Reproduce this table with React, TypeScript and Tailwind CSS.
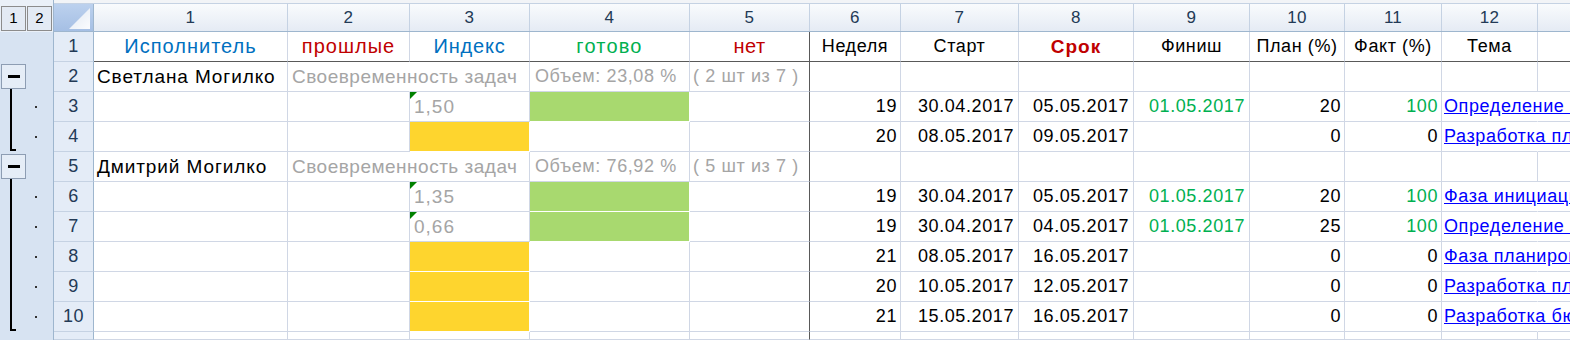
import type { ReactNode } from 'react';

const GRID = 'border-[#d0d7e5]';
const W = [
  'w-[194px]', 'w-[122px]', 'w-[120px]', 'w-[160px]', 'w-[120px]', 'w-[91px]',
  'w-[118px]', 'w-[115px]', 'w-[116px]', 'w-[95px]', 'w-[97px]', 'w-[96px]',
];

type Task = {
  idx?: string;
  week: number;
  start: string;
  due: string;
  finish?: string;
  plan: number;
  fact: number;
  topic: string;
};

type Person = { name: string; volume: string; count: string };

type SheetRow =
  | { kind: 'person'; n: number; person: Person }
  | { kind: 'task'; n: number; task: Task; last?: boolean };

const rows: SheetRow[] = [
  { kind: 'person', n: 2, person: { name: 'Светлана Могилко', volume: 'Объем: 23,08 %', count: '( 2 шт из 7 )' } },
  { kind: 'task', n: 3, task: { idx: '1,50', week: 19, start: '30.04.2017', due: '05.05.2017', finish: '01.05.2017', plan: 20, fact: 100, topic: 'Определение целей проекта' } },
  { kind: 'task', n: 4, last: true, task: { week: 20, start: '08.05.2017', due: '09.05.2017', plan: 0, fact: 0, topic: 'Разработка плана проекта' } },
  { kind: 'person', n: 5, person: { name: 'Дмитрий Могилко', volume: 'Объем: 76,92 %', count: '( 5 шт из 7 )' } },
  { kind: 'task', n: 6, task: { idx: '1,35', week: 19, start: '30.04.2017', due: '05.05.2017', finish: '01.05.2017', plan: 20, fact: 100, topic: 'Фаза инициации' } },
  { kind: 'task', n: 7, task: { idx: '0,66', week: 19, start: '30.04.2017', due: '04.05.2017', finish: '01.05.2017', plan: 25, fact: 100, topic: 'Определение требований' } },
  { kind: 'task', n: 8, task: { week: 21, start: '08.05.2017', due: '16.05.2017', plan: 0, fact: 0, topic: 'Фаза планирования' } },
  { kind: 'task', n: 9, task: { week: 20, start: '10.05.2017', due: '12.05.2017', plan: 0, fact: 0, topic: 'Разработка плана' } },
  { kind: 'task', n: 10, last: true, task: { week: 21, start: '15.05.2017', due: '16.05.2017', plan: 0, fact: 0, topic: 'Разработка бюджета' } },
];

function Cell({ col, className = '', children }: { col: number; className?: string; children?: ReactNode })
{
  const edge = col === 4 ? 'border-r-[#595959]' : '';
  return (
    <div className={`relative shrink-0 h-full border-r border-b ${GRID} ${edge} ${W[col]} whitespace-nowrap leading-[29px] ${className}`}>
      {children}
    </div>
  );
}

function RowHeader({ n }: { n?: number })
{
  return (
    <div className="shrink-0 w-[40px] h-full flex items-center justify-center bg-[#e4ecf7] border-r border-b border-r-[#9eb6ce] border-b-[#c5d2e3] text-[#233a56]">
      {n}
    </div>
  );
}

function GutterCell({ mode }: { mode: 'none' | 'head' | 'mid' | 'end' })
{
  return (
    <div className="relative h-[30px] shrink-0">
      {mode === 'head' && (
        <>
          <div className="absolute left-[1px] top-[2px] w-[25px] h-[25px] border border-[#8d9db3] bg-[#e5edf7] flex items-center justify-center">
            <div className="w-[12px] h-[3px] bg-black" />
          </div>
          <div className="absolute left-[10px] top-[27px] bottom-0 w-[2px] bg-black" />
        </>
      )}
      {(mode === 'mid' || mode === 'end') && (
        <>
          <div className={`absolute left-[10px] top-0 w-[2px] bg-black ${mode === 'end' ? 'bottom-[1px]' : 'bottom-0'}`} />
          {mode === 'end' && <div className="absolute left-[10px] bottom-[1px] w-[6px] h-[2px] bg-black" />}
          <div className="absolute left-[35px] top-[14px] w-[2px] h-[2px] bg-[#333]" />
        </>
      )}
    </div>
  );
}

function PersonRow({ n, person }: { n: number; person: Person })
{
  return (
    <div className="flex h-[30px]">
      <RowHeader n={n} />
      <Cell col={0} className="pl-[3px] text-black text-[19px] tracking-[0.9px]">{person.name}</Cell>
      <Cell col={1} className="pl-[4px] text-[#a5a5a5] text-[19px] tracking-[0.5px] border-r-transparent">Своевременность задач</Cell>
      <Cell col={2} />
      <Cell col={3} className="pl-[5px] text-[#a5a5a5]">{person.volume}</Cell>
      <Cell col={4} className="pl-[3px] text-[#a5a5a5]">{person.count}</Cell>
      {[5, 6, 7, 8, 9, 10, 11].map(c => <Cell key={c} col={c} />)}
      <div className={`flex-1 h-full border-b ${GRID}`} />
    </div>
  );
}

function TaskRow({ n, task }: { n: number; task: Task })
{
  const done = task.finish !== undefined;
  return (
    <div className="flex h-[30px]">
      <RowHeader n={n} />
      <Cell col={0} />
      <Cell col={1} />
      {task.idx ? (
        <Cell col={2} className="pl-[4px] text-[#a5a5a5] text-[19px] tracking-[1px]">
          <span className="absolute left-0 top-0 w-0 h-0 border-t-[7px] border-r-[7px] border-t-[#008000] border-r-transparent" />
          {task.idx}
        </Cell>
      ) : (
        <Cell col={2} className="bg-[#fed52e] border-white" />
      )}
      {done ? <Cell col={3} className="bg-[#a8d96f] border-white" /> : <Cell col={3} />}
      <Cell col={4} />
      <Cell col={5} className="text-right pr-[3px] text-black">{task.week}</Cell>
      <Cell col={6} className="text-right pr-[4px] text-black">{task.start}</Cell>
      <Cell col={7} className="text-right pr-[4px] text-black">{task.due}</Cell>
      <Cell col={8} className="text-right pr-[4px] text-[#00b050]">{task.finish}</Cell>
      <Cell col={9} className="text-right pr-[3px] text-black">{task.plan}</Cell>
      <Cell col={10} className={`text-right pr-[3px] ${task.fact > 0 ? 'text-[#00b050]' : 'text-black'}`}>{task.fact}</Cell>
      <Cell col={11} className="pl-[2px] border-r-transparent">
        <span className="text-[#0000ff] underline">{task.topic}</span>
      </Cell>
      <div className={`flex-1 h-full border-b ${GRID}`} />
    </div>
  );
}

const headers: { label: string; className: string }[] = [
  { label: 'Исполнитель', className: 'text-[#0070c0] text-[20px] tracking-[1px]' },
  { label: 'прошлые', className: 'text-[#c00000] text-[20px] tracking-[1px]' },
  { label: 'Индекс', className: 'text-[#0070c0] text-[20px] tracking-[0.8px]' },
  { label: 'готово', className: 'text-[#00b050] text-[20px] tracking-[1.2px]' },
  { label: 'нет', className: 'text-[#c00000] text-[20px] tracking-[0.5px]' },
  { label: 'Неделя', className: 'text-black' },
  { label: 'Старт', className: 'text-black' },
  { label: 'Срок', className: 'text-[#c00000] font-bold text-[19px] tracking-[1px]' },
  { label: 'Финиш', className: 'text-black' },
  { label: 'План (%)', className: 'text-black' },
  { label: 'Факт (%)', className: 'text-black' },
  { label: 'Тема', className: 'text-black' },
];

export default function App()
{
  return (
    <div className="w-[1570px] h-[340px] overflow-hidden bg-white flex font-['Liberation_Sans',Arial,sans-serif] text-[18px] tracking-[0.6px]">
      {/* outline gutter */}
      <div className="shrink-0 w-[54px] h-full flex flex-col bg-[#d7e3f2] border-r border-[#9eb6ce]">
        <div className="h-[32px] shrink-0 bg-[#eaf0f8] flex items-end gap-[1px] pl-[1px] pb-[1px] tracking-normal">
          {['1', '2'].map(l => (
            <div key={l} className="w-[25px] h-[25px] border border-[#8c8c8c] bg-[#e3eaf4] flex items-center justify-center text-[15px] text-black">
              {l}
            </div>
          ))}
        </div>
        <GutterCell mode="none" />
        {rows.map(r => (
          <GutterCell key={r.n} mode={r.kind === 'person' ? 'head' : r.last ? 'end' : 'mid'} />
        ))}
      </div>

      <div className="flex-1 min-w-0 flex flex-col">
        {/* column numbers */}
        <div className="h-[32px] shrink-0 flex flex-col bg-[#f2f4f7]">
          <div className="h-[4px] shrink-0 border-b border-[#c5d2e3]" />
          <div className="flex-1 flex border-b border-[#9eb6ce] bg-linear-to-b from-[#f9fbfd] to-[#e5ebf4] text-[17px] text-[#233a56] tracking-[0.3px]">
            <div className="shrink-0 w-[40px] h-full border-r border-[#9eb6ce] bg-linear-to-b from-[#bcd1ee] to-[#a5bfe4] relative">
              <svg className="absolute right-[3px] bottom-[2px]" width="21" height="21" viewBox="0 0 21 21">
                <defs>
                  <linearGradient id="tri" x1="0" y1="0" x2="1" y2="1">
                    <stop offset="0" stopColor="#dfe7f2" />
                    <stop offset="1" stopColor="#fbfcfe" />
                  </linearGradient>
                </defs>
                <polygon points="0,21 21,21 21,0" fill="url(#tri)" />
              </svg>
            </div>
            {W.map((w, i) => (
              <div key={i} className={`shrink-0 h-full ${w} border-r border-[#c5d2e3] flex items-center justify-center`}>
                {i + 1}
              </div>
            ))}
            <div className="flex-1" />
          </div>
        </div>

        {/* header row */}
        <div className="flex h-[30px]">
          <RowHeader n={1} />
          {headers.map((h, i) => (
            <Cell key={i} col={i} className={`text-center border-b-[#595959] ${h.className}`}>{h.label}</Cell>
          ))}
          <div className="flex-1 h-full border-b border-[#595959]" />
        </div>

        {rows.map(r =>
          r.kind === 'person'
            ? <PersonRow key={r.n} n={r.n} person={r.person} />
            : <TaskRow key={r.n} n={r.n} task={r.task} />
        )}

        {/* row 11, only its top edge is in view */}
        <div className="flex h-[30px]">
          <RowHeader />
          {W.map((_, i) => <Cell key={i} col={i} />)}
          <div className={`flex-1 h-full border-b ${GRID}`} />
        </div>
      </div>
    </div>
  );
}
